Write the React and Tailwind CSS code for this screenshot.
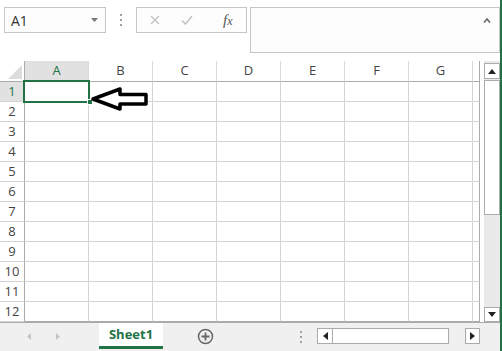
import React from 'react';

const cols = ['A', 'B', 'C', 'D', 'E', 'F', 'G'];
const rows = [1, 2, 3, 4, 5, 6, 7, 8, 9, 10, 11, 12];

const Dots = () => (
  <div className="flex flex-col gap-[3px]">
    <span className="w-[2px] h-[2px] bg-[#a0a0a0]" />
    <span className="w-[2px] h-[2px] bg-[#a0a0a0]" />
    <span className="w-[2px] h-[2px] bg-[#a0a0a0]" />
  </div>
);

const FormulaBar = () => (
  <div className="h-[62px] flex items-start pt-[7px] pl-[4px] bg-white">
    {/* Name box */}
    <div className="w-[102px] h-[26px] border border-[#c6c6c6] bg-[#fdfdfd] flex items-center justify-between pl-[6px] pr-[7px]">
      <span className="text-[14px] text-[#333]">A1</span>
      <svg width="7" height="4" viewBox="0 0 7 4">
        <path d="M0 0 L7 0 L3.5 4 Z" fill="#777" />
      </svg>
    </div>
    <div className="w-[30px] h-[26px] flex items-center justify-center">
      <Dots />
    </div>
    {/* Cancel / enter / fx */}
    <div className="w-[111px] h-[26px] border border-[#c6c6c6] bg-[#fdfdfd] flex items-center">
      <svg className="ml-[13px]" width="10" height="10" viewBox="0 0 10 10">
        <path d="M1 1 L9 9 M9 1 L1 9" stroke="#c4c4c4" strokeWidth="1.4" />
      </svg>
      <svg className="ml-[21px]" width="12" height="10" viewBox="0 0 12 10">
        <path d="M1 5.5 L4.5 9 L11 1" stroke="#c4c4c4" strokeWidth="1.6" fill="none" />
      </svg>
      <span className="ml-[30px] text-[15px] italic text-[#555] leading-none" style={{ fontFamily: '"Liberation Serif", serif' }}>
        f<span className="text-[12px]">x</span>
      </span>
    </div>
    {/* Formula input */}
    <div className="ml-[3px] w-[250px] h-[46px] border border-[#c6c6c6] bg-[#fdfdfd] flex justify-end pt-[10px] pr-[8px]">
      <svg width="8" height="5" viewBox="0 0 8 5">
        <path d="M1 4.5 L4 1 L7 4.5" stroke="#666" strokeWidth="1.6" fill="none" />
      </svg>
    </div>
  </div>
);

const Sheet = () => (
  <div className="relative">
    <div className="grid grid-cols-[25px_repeat(7,64px)_7px] grid-rows-[21px_repeat(12,20px)]">
      {/* header row */}
      <div className="border-r border-b border-[#ababab] bg-white flex items-end justify-end pr-[2px] pb-[2px]">
        <svg width="14" height="14" viewBox="0 0 14 14">
          <path d="M14 0 L14 14 L0 14 Z" fill="#dcdcdc" />
        </svg>
      </div>
      {cols.map((c) => (
        <div
          key={c}
          className={`border-r border-b border-r-[#dadada] border-b-[#ababab] flex items-center justify-center text-[13px] ${
            c === 'A' ? 'bg-[#e1e1e1] text-[#217346]' : 'bg-white text-[#444]'
          }`}
        >
          {c}
        </div>
      ))}
      <div className="border-r border-b border-r-[#ababab] border-b-[#ababab] bg-white" />
      {rows.map((r) => (
        <React.Fragment key={r}>
          <div
            className={`border-r border-b border-r-[#ababab] border-b-[#d4d4d4] flex items-center justify-center text-[13px] ${
              r === 1 ? 'bg-[#e1e1e1] text-[#217346]' : 'bg-white text-[#444]'
            } ${r === 12 ? 'border-b-[#ababab]' : ''}`}
          >
            {r}
          </div>
          {cols.map((c) => (
            <div
              key={c}
              className={`border-r border-b border-r-[#d4d4d4] bg-white ${r === 12 ? 'border-b-[#ababab]' : 'border-b-[#d4d4d4]'}`}
            />
          ))}
          <div className={`border-r border-b border-r-[#ababab] bg-white ${r === 12 ? 'border-b-[#ababab]' : 'border-b-[#d4d4d4]'}`} />
        </React.Fragment>
      ))}
    </div>
    {/* selection around A1 */}
    <div className="absolute left-[23px] top-[19px] w-[67px] h-[23px] border-2 border-[#217346]" />
    <div className="absolute left-[87px] top-[38px] w-[6px] h-[6px] bg-[#217346] border border-white" />
    {/* pointer arrow */}
    <svg className="absolute left-[90px] top-[26px]" width="60" height="24" viewBox="0 0 60 24">
      <path
        d="M3 12 L30 2 L30 7.5 L56 7.5 L56 17 L30 17 L30 22 Z"
        fill="white"
        stroke="black"
        strokeWidth="3.5"
        strokeLinejoin="round"
      />
    </svg>
  </div>
);

const VScroll = () => (
  <div className="w-[16px] h-[261px] flex flex-col pt-[2px] bg-[#e9e9e9]">
    <div className="h-[16px] border border-[#ababab] bg-white flex items-center justify-center">
      <svg width="8" height="5" viewBox="0 0 8 5">
        <path d="M0 5 L4 0 L8 5 Z" fill="#222" />
      </svg>
    </div>
    <div className="h-[135px] border border-[#ababab] bg-white mt-[1px]" />
    <div className="flex-1" />
    <div className="h-[15px] border border-[#ababab] bg-white flex items-center justify-center">
      <svg width="8" height="5" viewBox="0 0 8 5">
        <path d="M0 0 L8 0 L4 5 Z" fill="#222" />
      </svg>
    </div>
  </div>
);

const TabBar = () => (
  <div className="h-[28px] bg-[#f0f0f0] flex items-start">
    <div className="w-[99px] h-[26px] flex items-center pl-[27px] gap-[25px]">
      <svg width="4" height="7" viewBox="0 0 4 7">
        <path d="M4 0 L4 7 L0 3.5 Z" fill="#c4c4c4" />
      </svg>
      <svg width="4" height="7" viewBox="0 0 4 7">
        <path d="M0 0 L0 7 L4 3.5 Z" fill="#c4c4c4" />
      </svg>
    </div>
    <div className="w-[64px] h-[26px] bg-white border-b-[3px] border-[#217346] flex items-center justify-center text-[13px] font-bold text-[#217346]">
      Sheet1
    </div>
    <div className="w-[84px] h-[26px] flex items-center justify-center">
      <svg width="17" height="17" viewBox="0 0 17 17">
        <circle cx="8.5" cy="8.5" r="7" stroke="#666" strokeWidth="1.5" fill="none" />
        <path d="M8.5 4.5 L8.5 12.5 M4.5 8.5 L12.5 8.5" stroke="#666" strokeWidth="1.8" />
      </svg>
    </div>
    <div className="w-[70px] h-[26px] flex items-center justify-end pr-[15px] pt-[1px]">
      <Dots />
    </div>
    <div className="mt-[5px] w-[132px] h-[16px] border border-[#ababab] bg-white flex">
      <div className="w-[15px] border-r border-[#ababab] flex items-center justify-center">
        <svg width="5" height="8" viewBox="0 0 5 8">
          <path d="M5 0 L5 8 L0 4 Z" fill="#222" />
        </svg>
      </div>
    </div>
    <div className="mt-[5px] ml-[16px] w-[15px] h-[16px] border border-[#ababab] bg-white flex items-center justify-center">
      <svg width="5" height="8" viewBox="0 0 5 8">
        <path d="M0 0 L0 8 L5 4 Z" fill="#222" />
      </svg>
    </div>
  </div>
);

export default function App() {
  return (
    <div
      className="w-[502px] h-[351px] overflow-hidden bg-white flex"
      style={{ fontFamily: '"Open Sans", "Noto Sans", sans-serif' }}
    >
      <div className="w-[500px] flex flex-col">
        <FormulaBar />
        <div className="flex">
          <Sheet />
          <div className="w-[4px]" />
          <VScroll />
        </div>
        <div className="border-t border-[#ababab]">
          <TabBar />
        </div>
      </div>
      <div className="w-[2px] bg-[#217346]" />
    </div>
  );
}
